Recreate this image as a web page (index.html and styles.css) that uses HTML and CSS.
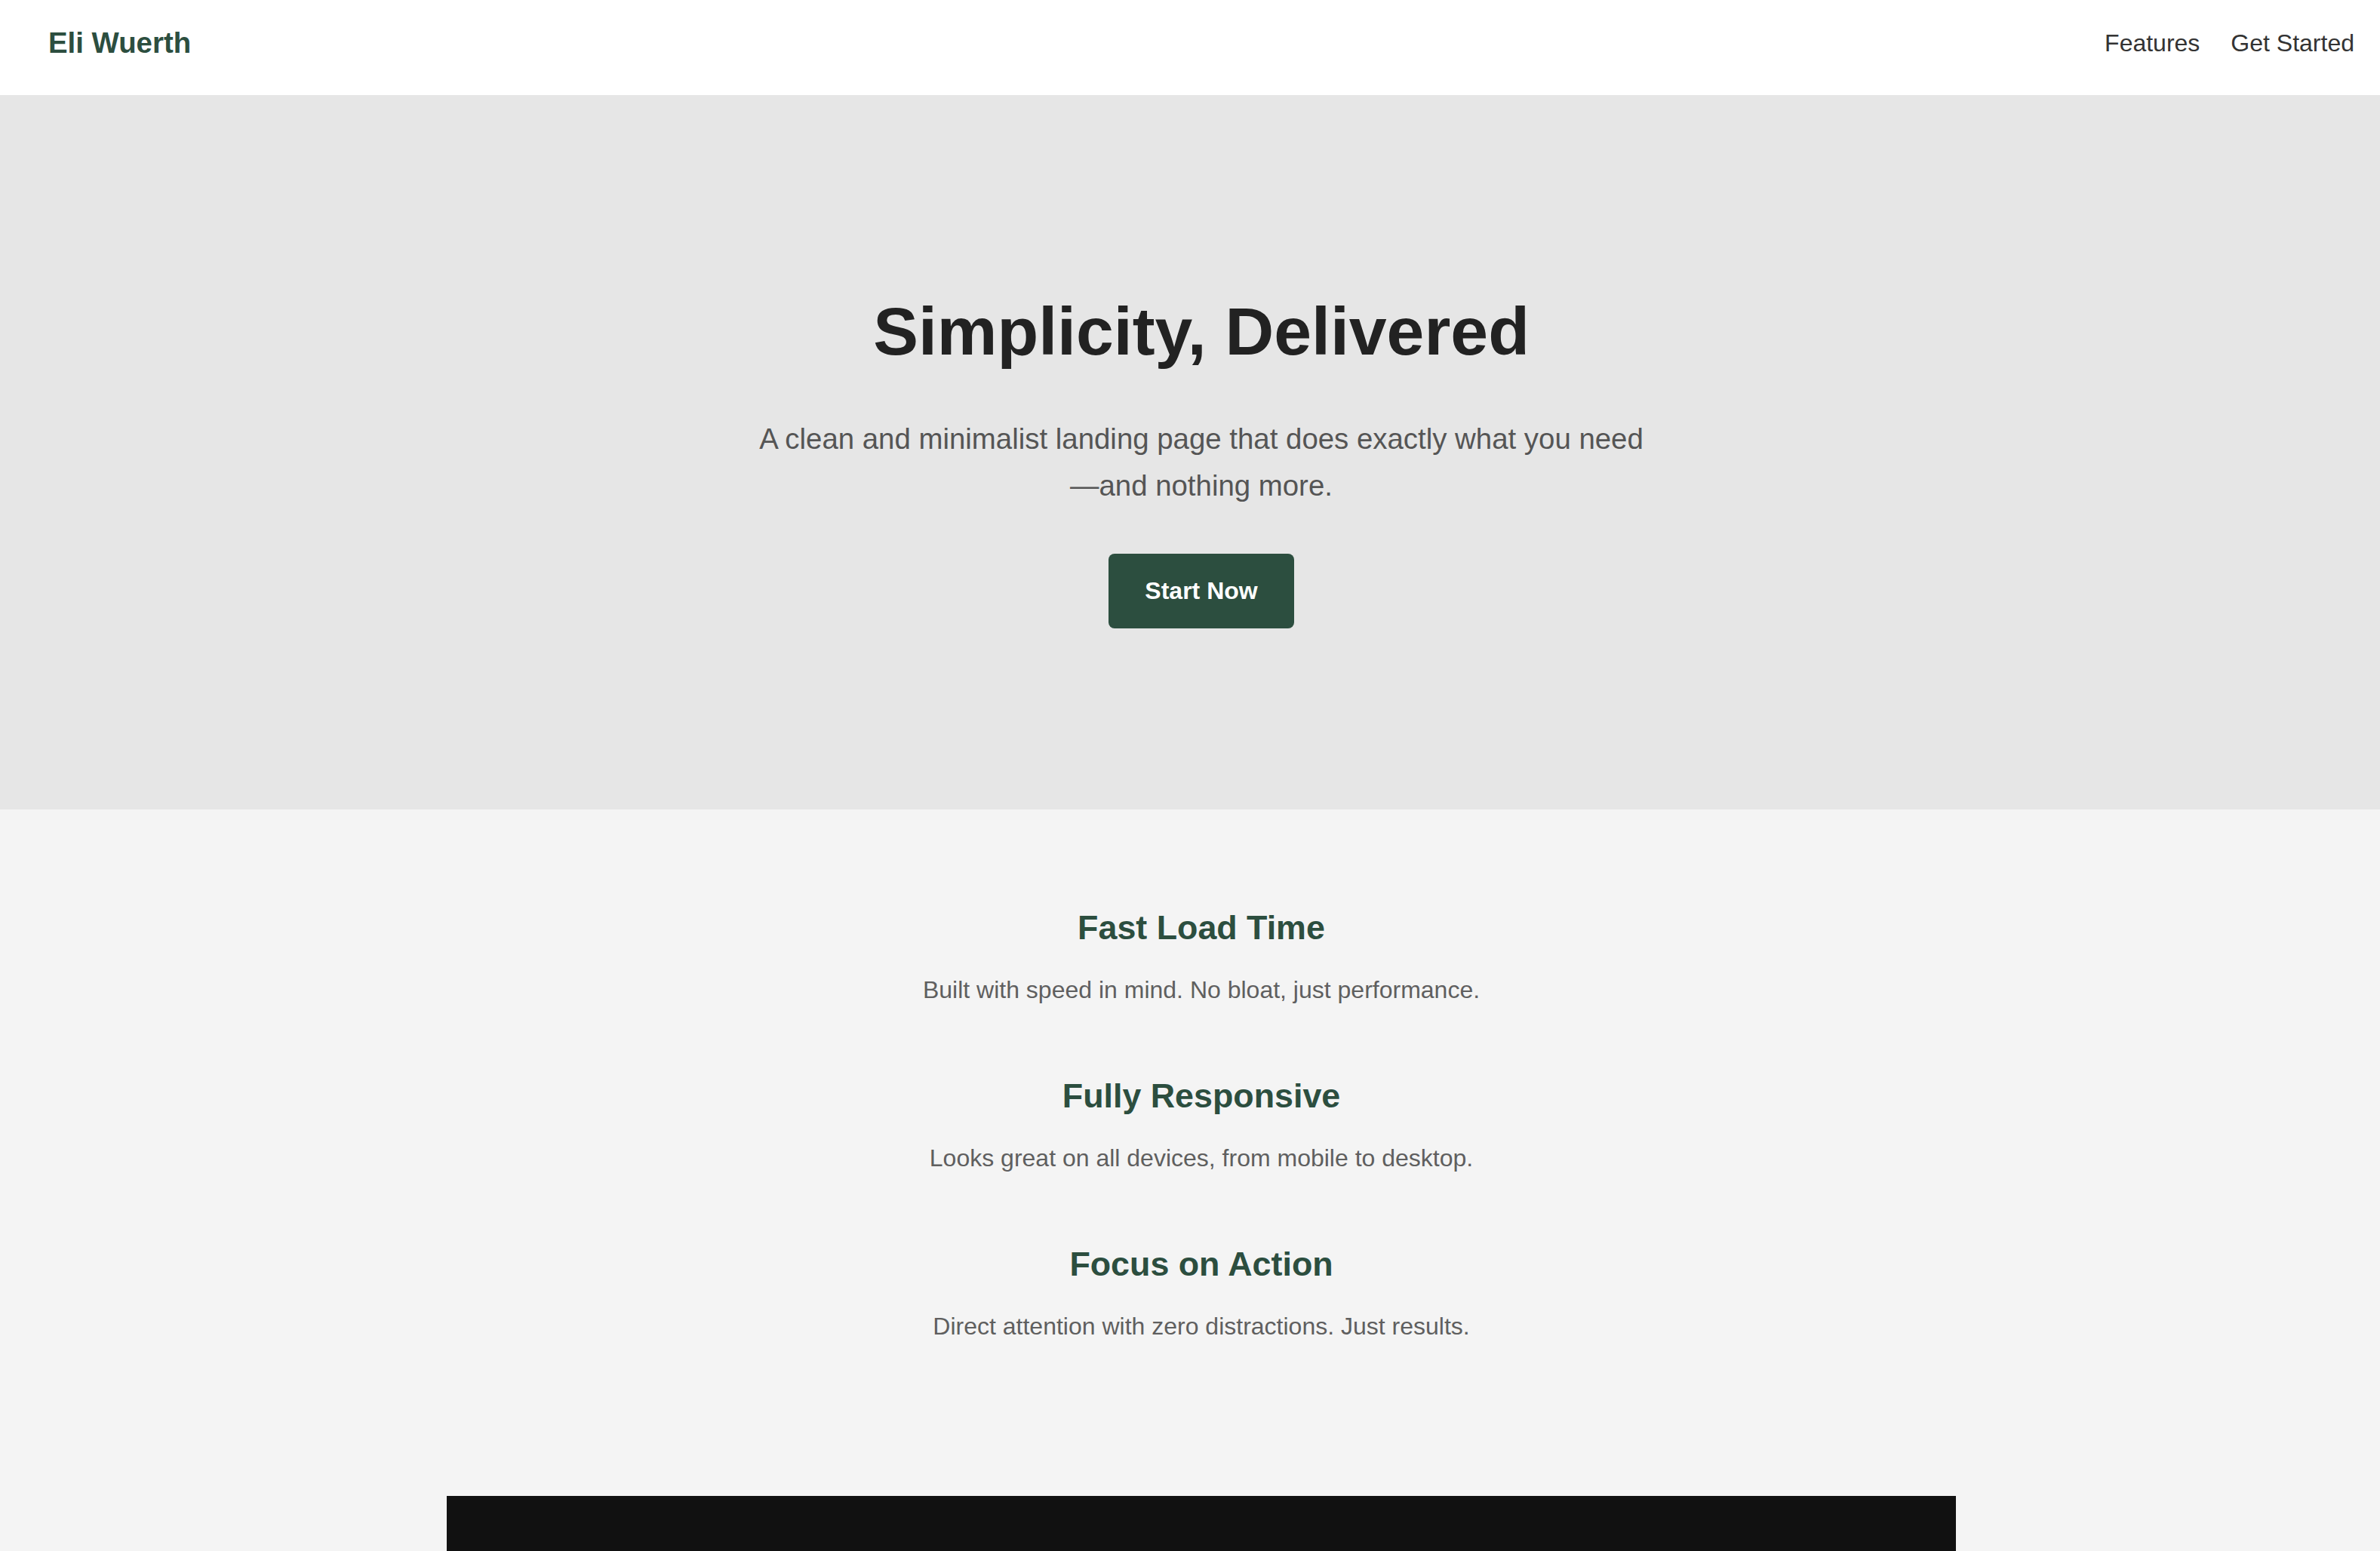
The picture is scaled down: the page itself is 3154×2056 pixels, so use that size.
FILE: index.html
```html
<!DOCTYPE html>
<html lang="en">
<head>
<meta charset="utf-8">
<title>Eli Wuerth</title>
<link rel="stylesheet" href="styles.css">
</head>
<body>
<div class="page">
  <header class="site-header">
    <a class="logo" href="#">Eli Wuerth</a>
    <nav class="nav">
      <a href="#features">Features</a>
      <a href="#start">Get Started</a>
    </nav>
  </header>
  <section class="hero">
    <h1 class="hero-title">Simplicity, Delivered</h1>
    <p class="hero-sub">A clean and minimalist landing page that does exactly what you need—and nothing more.</p>
    <a class="btn" href="#start">Start Now</a>
  </section>
  <section class="features" id="features">
    <div class="feature">
      <h3 class="feature-title">Fast Load Time</h3>
      <p class="feature-text">Built with speed in mind. No bloat, just performance.</p>
    </div>
    <div class="feature">
      <h3 class="feature-title">Fully Responsive</h3>
      <p class="feature-text">Looks great on all devices, from mobile to desktop.</p>
    </div>
    <div class="feature">
      <h3 class="feature-title">Focus on Action</h3>
      <p class="feature-text">Direct attention with zero distractions. Just results.</p>
    </div>
  </section>
  <footer class="footer" id="start"></footer>
</div>
</body>
</html>
```

FILE: styles.css
```css
* { box-sizing: border-box; }
html, body { margin: 0; padding: 0; }
body {
  font-family: "Liberation Sans", Arial, Helvetica, sans-serif;
  background: #f4f4f4;
  color: #222;
  line-height: 1.6;
  height: 2056px;
  overflow: hidden;
}
.page {
  width: 3184px;
}
a { text-decoration: none; }

.site-header {
  height: 126px;
  background: #fff;
  display: flex;
  align-items: center;
  justify-content: space-between;
  padding: 0 64px 12px 64px;
}
.logo {
  font-size: 38.4px;
  font-weight: 700;
  color: #2c4e3f;
  line-height: 1;
}
.nav { display: flex; gap: 41px; }
.nav a {
  font-size: 32px;
  color: #333;
  line-height: 1;
}

.hero {
  background: #e6e6e6;
  text-align: center;
  padding: 242px 32px 240px;
}
.hero-title {
  margin: 0 0 40px;
  font-size: 89.6px;
  font-weight: 700;
  line-height: 1.6;
  color: #222;
}
.hero-sub {
  margin: 0 auto 60px;
  max-width: 1200px;
  font-size: 38.4px;
  line-height: 1.6;
  color: #555;
}
.btn {
  display: inline-block;
  background: #2c4e3f;
  color: #fff;
  font-size: 32px;
  font-weight: 700;
  line-height: 1.6;
  padding: 24px 48px;
  border-radius: 8px;
}

.features {
  text-align: center;
  padding: 130px 32px 199px;
}
.feature { margin-bottom: 88px; }
.feature:last-child { margin-bottom: 0; }
.feature-title {
  margin: 0 0 30px;
  font-size: 44.8px;
  font-weight: 700;
  line-height: 1.2;
  color: #2c4e3f;
}
.feature-text {
  margin: 0;
  font-size: 32px;
  line-height: 1.6;
  color: #5f5f5f;
}

.footer {
  width: 2000px;
  height: 300px;
  margin: 0 auto;
  background: #111;
}
```
